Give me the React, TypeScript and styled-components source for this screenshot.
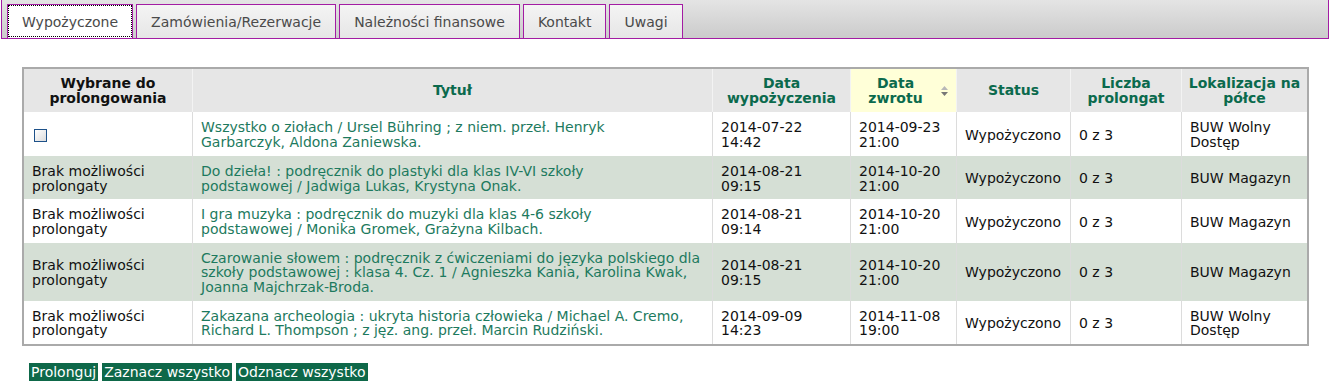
import styled, { createGlobalStyle } from 'styled-components';

interface Loan {
  canRenew: boolean;
  title: string[];
  borrowed: [string, string];
  due: [string, string];
  status: string;
  renewals: string;
  location: string;
}

const loans: Loan[] = [
  {
    canRenew: true,
    title: ['Wszystko o ziołach / Ursel Bühring ; z niem. przeł. Henryk', 'Garbarczyk, Aldona Zaniewska.'],
    borrowed: ['2014-07-22', '14:42'],
    due: ['2014-09-23', '21:00'],
    status: 'Wypożyczono',
    renewals: '0 z 3',
    location: 'BUW Wolny Dostęp',
  },
  {
    canRenew: false,
    title: ['Do dzieła! : podręcznik do plastyki dla klas IV-VI szkoły', 'podstawowej / Jadwiga Lukas, Krystyna Onak.'],
    borrowed: ['2014-08-21', '09:15'],
    due: ['2014-10-20', '21:00'],
    status: 'Wypożyczono',
    renewals: '0 z 3',
    location: 'BUW Magazyn',
  },
  {
    canRenew: false,
    title: ['I gra muzyka : podręcznik do muzyki dla klas 4-6 szkoły', 'podstawowej / Monika Gromek, Grażyna Kilbach.'],
    borrowed: ['2014-08-21', '09:14'],
    due: ['2014-10-20', '21:00'],
    status: 'Wypożyczono',
    renewals: '0 z 3',
    location: 'BUW Magazyn',
  },
  {
    canRenew: false,
    title: [
      'Czarowanie słowem : podręcznik z ćwiczeniami do języka polskiego dla',
      'szkoły podstawowej : klasa 4. Cz. 1 / Agnieszka Kania, Karolina Kwak,',
      'Joanna Majchrzak-Broda.',
    ],
    borrowed: ['2014-08-21', '09:15'],
    due: ['2014-10-20', '21:00'],
    status: 'Wypożyczono',
    renewals: '0 z 3',
    location: 'BUW Magazyn',
  },
  {
    canRenew: false,
    title: [
      'Zakazana archeologia : ukryta historia człowieka / Michael A. Cremo,',
      'Richard L. Thompson ; z jęz. ang. przeł. Marcin Rudziński.',
    ],
    borrowed: ['2014-09-09', '14:23'],
    due: ['2014-11-08', '19:00'],
    status: 'Wypożyczono',
    renewals: '0 z 3',
    location: 'BUW Wolny Dostęp',
  },
];

const tabs = ['Wypożyczone', 'Zamówienia/Rezerwacje', 'Należności finansowe', 'Kontakt', 'Uwagi'];

const GlobalStyle = createGlobalStyle`
  body {
    margin: 0;
    font-family: 'DejaVu Sans', Verdana, sans-serif;
    font-size: 14px;
    color: #111;
    background: #fff;
  }
`;

const TabBar = styled.div`
  display: flex;
  align-items: flex-end;
  height: 38px;
  margin: 0 2px 0 1px;
  padding-left: 5px;
  background: linear-gradient(#e4e4e4, #cbcbcb);
  border: 1px solid #a31ca3;
  border-top: none;
`;

const Tab = styled.div<{ $active?: boolean }>`
  height: 33px;
  line-height: 34px;
  padding: 0 14px;
  margin-right: 3px;
  border: 1px solid #a31ca3;
  border-bottom: none;
  color: #4a4a4a;
  background: ${({ $active }) => ($active ? '#fff' : 'linear-gradient(#f4f4f4, #e6e6e6)')};
  outline: ${({ $active }) => ($active ? '1px dotted #000' : 'none')};
  outline-offset: -2px;
  white-space: nowrap;
`;

const Table = styled.table`
  width: 1287px;
  margin: 28px 0 0 22px;
  border: 2px solid #aaa;
  border-collapse: separate;
  border-spacing: 0;
  table-layout: fixed;
`;

const Th = styled.th<{ $sorted?: boolean; $plain?: boolean }>`
  position: relative;
  padding: 7px ${({ $sorted }) => ($sorted ? '20px' : '4px')} 7px 4px;
  line-height: 14.7px;
  font-weight: bold;
  text-align: center;
  white-space: nowrap;
  color: ${({ $plain }) => ($plain ? '#111' : '#0b6a4d')};
  background: ${({ $sorted }) => ($sorted ? '#ffffd8' : '#e6e6e6')};
  border-left: 1px solid #f3f3f3;

  &:first-child {
    border-left: none;
  }
`;

const SortIcon = styled.svg`
  position: absolute;
  right: 8px;
  top: 50%;
  margin-top: -5px;
`;

const Row = styled.tr<{ $alt: boolean }>`
  background: ${({ $alt }) => ($alt ? '#d5dfd5' : '#fff')};
`;

const Td = styled.td<{ $link?: boolean }>`
  padding: 8px 8px 6px;
  line-height: 14.7px;
  vertical-align: middle;
  color: ${({ $link }) => ($link ? '#1d7a5e' : '#111')};
  border-left: 1px solid #dcdcdc;

  &:first-child {
    border-left: none;
  }
`;

const Check = styled.input`
  appearance: none;
  display: block;
  width: 13px;
  height: 13px;
  margin: 0 0 0 2px;
  border: 1px solid #1d5189;
  background: linear-gradient(135deg, #fff, #dcdcdc);
`;

const Actions = styled.div`
  display: flex;
  gap: 4px;
  margin: 17px 0 0 29px;
`;

const ActionButton = styled.button`
  font-family: 'DejaVu Sans', Verdana, sans-serif;
  font-size: 14px;
  line-height: 18px;
  height: 18px;
  padding: 0 2px;
  border: none;
  color: #fff;
  background: #0e6849;
`;

const widths = [168, 520, 138, 106, 114, 111, 126];

export default function App() {
  return (
    <>
      <GlobalStyle />
      <TabBar>
        {tabs.map((t, i) => (
          <Tab key={t} $active={i === 0}>
            {t}
          </Tab>
        ))}
      </TabBar>

      <Table>
        <colgroup>
          {widths.map((w, i) => (
            <col key={i} style={{ width: w }} />
          ))}
        </colgroup>
        <thead>
          <tr>
            <Th $plain>
              Wybrane do
              <br />
              prolongowania
            </Th>
            <Th>Tytuł</Th>
            <Th>
              Data
              <br />
              wypożyczenia
            </Th>
            <Th $sorted>
              Data
              <br />
              zwrotu
              <SortIcon width="7" height="10" viewBox="0 0 7 10">
                <path d="M3.5 0 L7 4 L0 4 Z" fill="#b8b8b8" />
                <path d="M0 6 L7 6 L3.5 10 Z" fill="#777" />
              </SortIcon>
            </Th>
            <Th>Status</Th>
            <Th>
              Liczba
              <br />
              prolongat
            </Th>
            <Th>
              Lokalizacja na
              <br />
              półce
            </Th>
          </tr>
        </thead>
        <tbody>
          {loans.map((l, i) => (
            <Row key={i} $alt={i % 2 === 1}>
              <Td>
                {l.canRenew ? (
                  <Check type="checkbox" />
                ) : (
                  <>
                    Brak możliwości
                    <br />
                    prolongaty
                  </>
                )}
              </Td>
              <Td $link>
                {l.title.map((line, j) => (
                  <span key={j}>
                    {j > 0 && <br />}
                    {line}
                  </span>
                ))}
              </Td>
              <Td>
                {l.borrowed[0]}
                <br />
                {l.borrowed[1]}
              </Td>
              <Td>
                {l.due[0]}
                <br />
                {l.due[1]}
              </Td>
              <Td>{l.status}</Td>
              <Td>{l.renewals}</Td>
              <Td>{l.location}</Td>
            </Row>
          ))}
        </tbody>
      </Table>

      <Actions>
        <ActionButton>Prolonguj</ActionButton>
        <ActionButton>Zaznacz wszystko</ActionButton>
        <ActionButton>Odznacz wszystko</ActionButton>
      </Actions>
    </>
  );
}
